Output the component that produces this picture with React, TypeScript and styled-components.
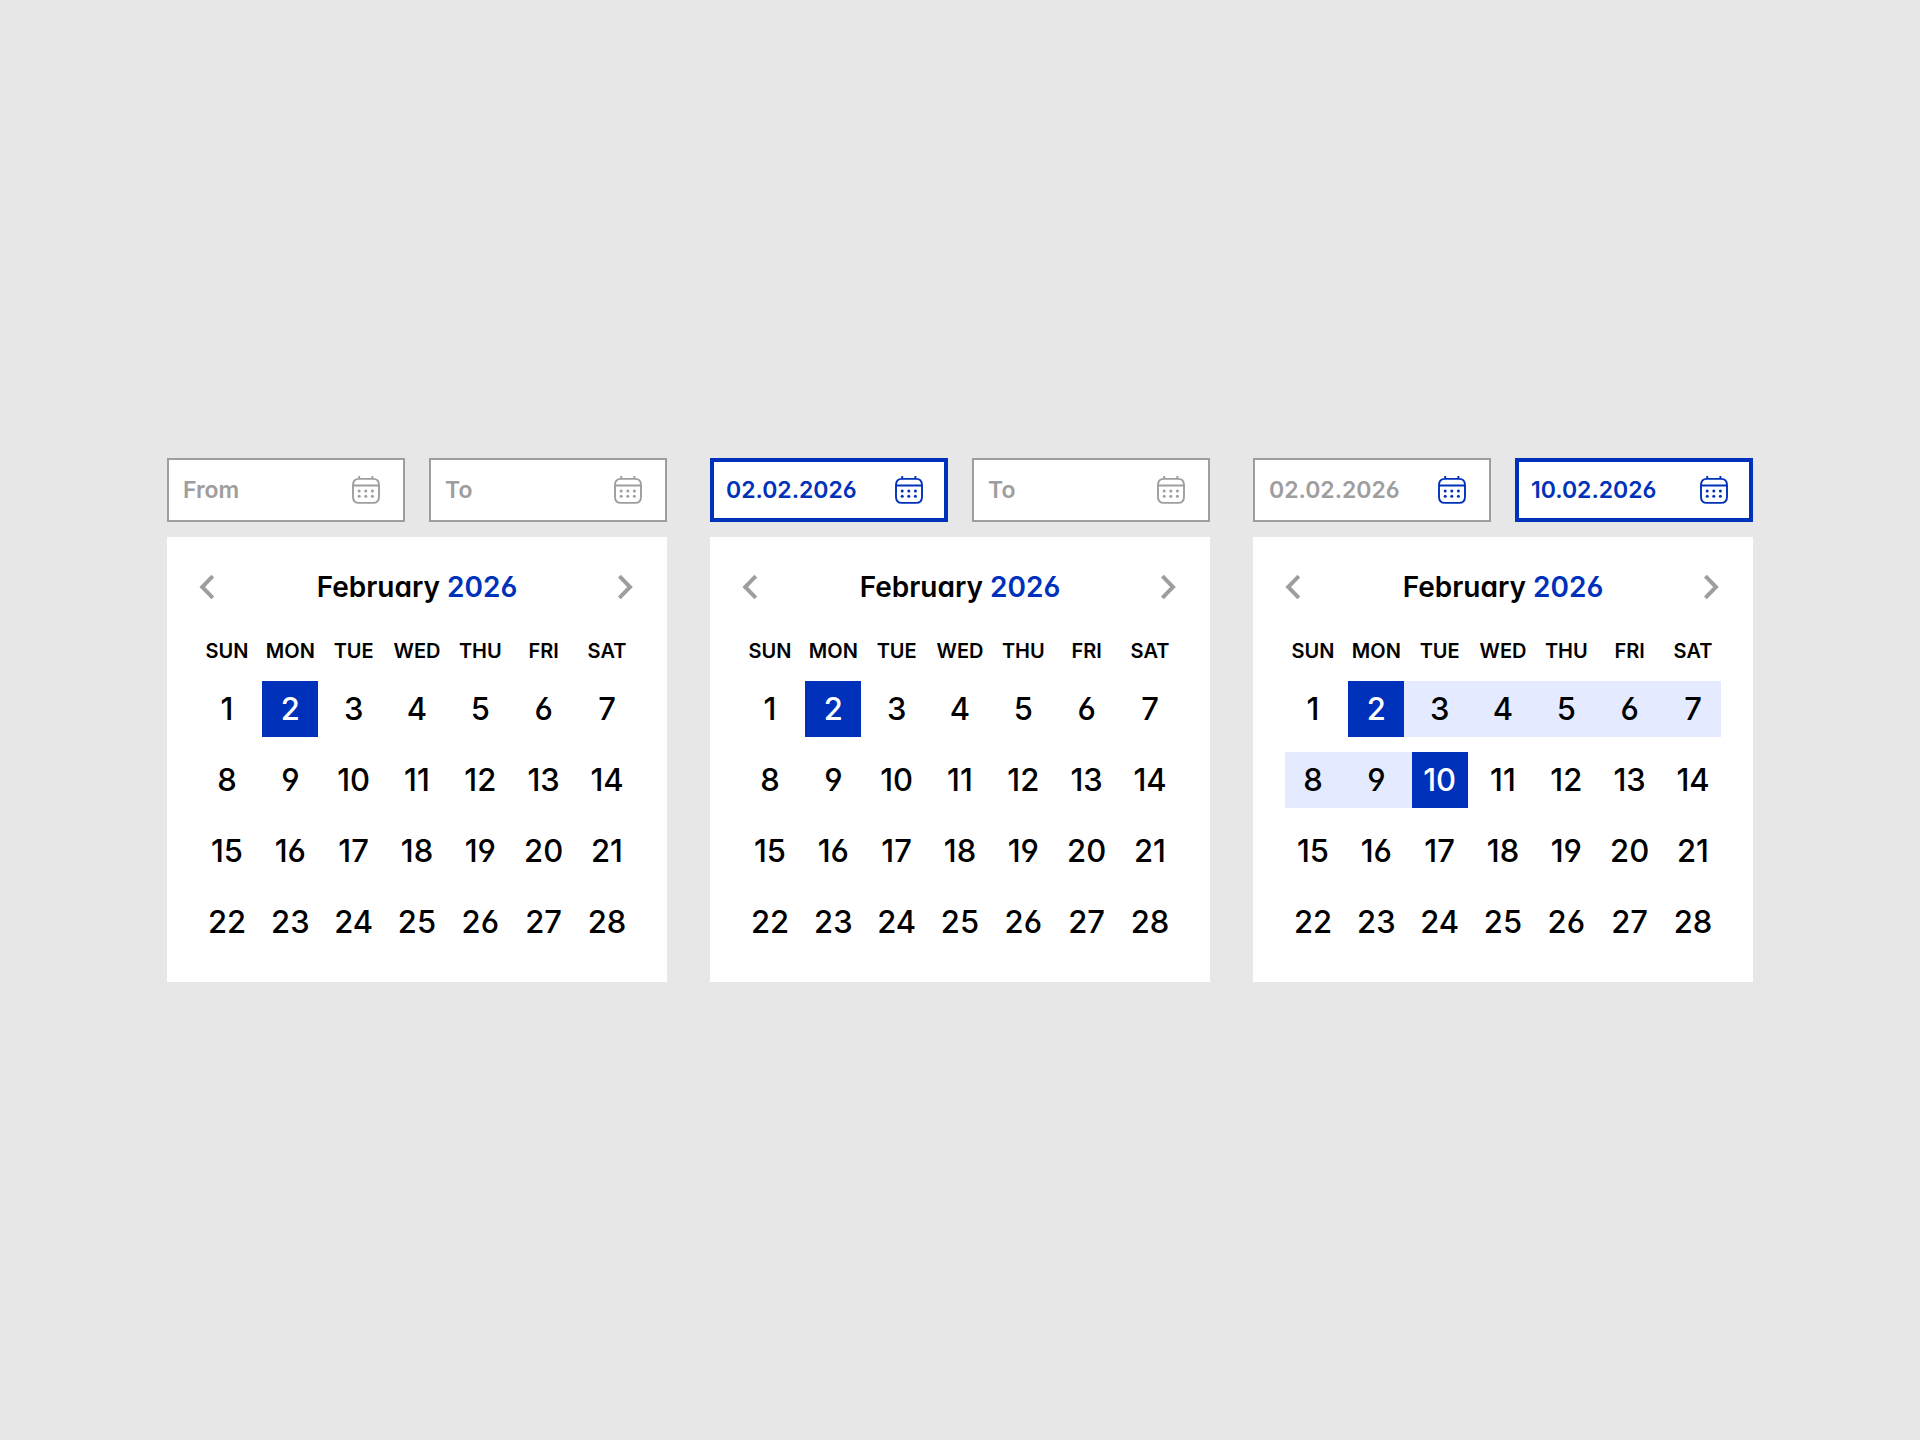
import React, { useState } from "react";
import styled, { createGlobalStyle, css } from "styled-components";

const color = {
  page: "#e7e7e7",
  surface: "#ffffff",
  text: "#000000",
  muted: "#9e9e9e",
  accent: "#0031bb",
  range: "#e4eaff",
};

const GlobalStyle = createGlobalStyle`
  * { box-sizing: border-box; }
  body {
    margin: 0;
    background: ${color.page};
    font-family: Inter, "Open Sans", sans-serif;
    font-feature-settings: "cv11", "cv03", "cv04";
  }
  button, input {
    font: inherit;
    font-feature-settings: inherit;
    color: inherit;
  }
`;

const Page = styled.main`
  min-height: 100vh;
  padding: 40px;
  display: flex;
  flex-wrap: wrap;
  align-items: center;
  align-content: center;
  justify-content: center;
  gap: 43px;
  color: ${color.text};
`;

const Picker = styled.section`
  flex: 0 1 500px;
  min-width: 0;
  display: flex;
  flex-direction: column;
  gap: 15px;
`;

const Fields = styled.div`
  display: flex;
  gap: 24px;
`;

const Field = styled.div<{ $active: boolean }>`
  flex: 1;
  min-width: 0;
  height: 64px;
  padding: 0 25px 0 16px;
  display: flex;
  align-items: center;
  justify-content: space-between;
  background: ${color.surface};
  box-shadow: inset 0 0 0
    ${(p) => (p.$active ? `4px ${color.accent}` : `2px ${color.muted}`)};
`;

const DateInput = styled.input<{ $active: boolean }>`
  flex: 1;
  width: 100%;
  min-width: 0;
  padding: 0;
  border: 0;
  outline: 0;
  background: transparent;
  font-size: 23px;
  line-height: 32px;
  font-weight: 600;
  color: ${(p) => (p.$active ? color.accent : color.muted)};
  &::placeholder {
    color: ${color.muted};
    opacity: 1;
  }
`;

const IconButton = styled.button<{ $accent?: boolean }>`
  padding: 0;
  border: 0;
  background: none;
  display: flex;
  cursor: pointer;
  color: ${(p) => (p.$accent ? color.accent : color.muted)};
`;

const Card = styled.div`
  padding: 32px;
  background: ${color.surface};
`;

const CardHeader = styled.header`
  height: 36px;
  margin-bottom: 30px;
  display: flex;
  align-items: center;
  justify-content: space-between;
`;

const MonthTitle = styled.h2`
  margin: 0;
  font-size: 28px;
  line-height: 36px;
  font-weight: 600;
`;

const Year = styled.span`
  color: ${color.accent};
`;

const Grid = styled.table`
  width: 100%;
  table-layout: fixed;
  border-collapse: collapse;
`;

const Weekday = styled.th`
  height: 31px;
  padding: 0;
  font-size: 20px;
  line-height: 24px;
  font-weight: 600;
  text-align: left;
  &:last-child {
    width: 56px;
  }
`;

const WeekdayLabel = styled.span`
  display: block;
  width: 56px;
  text-align: center;
`;

const DayCell = styled.td<{ $band: boolean }>`
  padding: 15px 0 0;
  background-clip: content-box;
  ${(p) =>
    p.$band &&
    css`
      background-color: ${color.range};
    `}
`;

const Day = styled.button<{ $selected: boolean }>`
  display: block;
  width: 56px;
  height: 56px;
  padding: 0;
  border: 0;
  font-size: 31px;
  line-height: 56px;
  font-weight: 500;
  text-align: center;
  cursor: pointer;
  background: ${(p) => (p.$selected ? color.accent : "transparent")};
  color: ${(p) => (p.$selected ? color.surface : color.text)};
`;

const CalendarIcon = () => (
  <svg width="28" height="28" viewBox="0 0 28 28" fill="none" aria-hidden="true">
    <path
      d="M7 2.9h14c4.4 0 6 1.8 6 6.2v11.6c0 4.4-1.6 6.2-6 6.2H7c-4.4 0-6-1.8-6-6.2V9.1c0-4.4 1.6-6.2 6-6.2Z"
      stroke="currentColor"
      strokeWidth="1.9"
    />
    <path d="M7.2 0v3M20.4 0v3M1 9.5h26" stroke="currentColor" strokeWidth="1.9" />
    {[7.2, 13.8, 20.4].map((x) =>
      [15, 20.2].map((y) => <circle key={`${x}-${y}`} cx={x} cy={y} r="1.5" fill="currentColor" />),
    )}
  </svg>
);

const Chevron = ({ flip }: { flip?: boolean }) => (
  <svg width="18" height="26" viewBox="0 0 18 26" fill="none" aria-hidden="true">
    <path d={flip ? "M2.4 2.2 13 13 2.4 23.8" : "M13.8 2.2 3.2 13 13.8 23.8"} stroke="currentColor" strokeWidth="4" />
  </svg>
);

const weekdays = ["SUN", "MON", "TUE", "WED", "THU", "FRI", "SAT"];
const weeks = [0, 1, 2, 3].map((w) => weekdays.map((_, d) => w * 7 + d + 1));

type PickerProps = {
  id: string;
  from?: string;
  to?: string;
  start: number;
  end?: number;
  active?: "from" | "to";
};

function DateRangePicker({ id, from = "", to = "", start, end = start, active }: PickerProps) {
  const [fromValue, setFrom] = useState(from);
  const [toValue, setTo] = useState(to);
  return (
    <Picker aria-label="Date range">
      <Fields>
        <Field $active={active === "from"}>
          <DateInput id={`${id}-from`} aria-label="From" placeholder="From" value={fromValue}
            onChange={(e) => setFrom(e.target.value)} $active={active === "from"} />
          <IconButton type="button" aria-label="Open start date" $accent={from !== ""}><CalendarIcon /></IconButton>
        </Field>
        <Field $active={active === "to"}>
          <DateInput id={`${id}-to`} aria-label="To" placeholder="To" value={toValue}
            onChange={(e) => setTo(e.target.value)} $active={active === "to"} />
          <IconButton type="button" aria-label="Open end date" $accent={to !== ""}><CalendarIcon /></IconButton>
        </Field>
      </Fields>
      <Card>
        <CardHeader>
          <IconButton type="button" aria-label="Previous month"><Chevron /></IconButton>
          <MonthTitle>February <Year>2026</Year></MonthTitle>
          <IconButton type="button" aria-label="Next month"><Chevron flip /></IconButton>
        </CardHeader>
        <Grid>
          <thead>
            <tr>
              {weekdays.map((name) => (
                <Weekday key={name} scope="col"><WeekdayLabel>{name}</WeekdayLabel></Weekday>
              ))}
            </tr>
          </thead>
          <tbody>
            {weeks.map((week) => (
              <tr key={week[0]}>
                {week.map((day) => (
                  <DayCell key={day} $band={day >= start && day < end}>
                    <Day type="button" $selected={day === start || day === end}>{day}</Day>
                  </DayCell>
                ))}
              </tr>
            ))}
          </tbody>
        </Grid>
      </Card>
    </Picker>
  );
}

export default function App() {
  return (
    <>
      <GlobalStyle />
      <Page>
        <DateRangePicker id="empty" start={2} />
        <DateRangePicker id="started" start={2} from="02.02.2026" active="from" />
        <DateRangePicker id="complete" start={2} end={10} from="02.02.2026" to="10.02.2026" active="to" />
      </Page>
    </>
  );
}
